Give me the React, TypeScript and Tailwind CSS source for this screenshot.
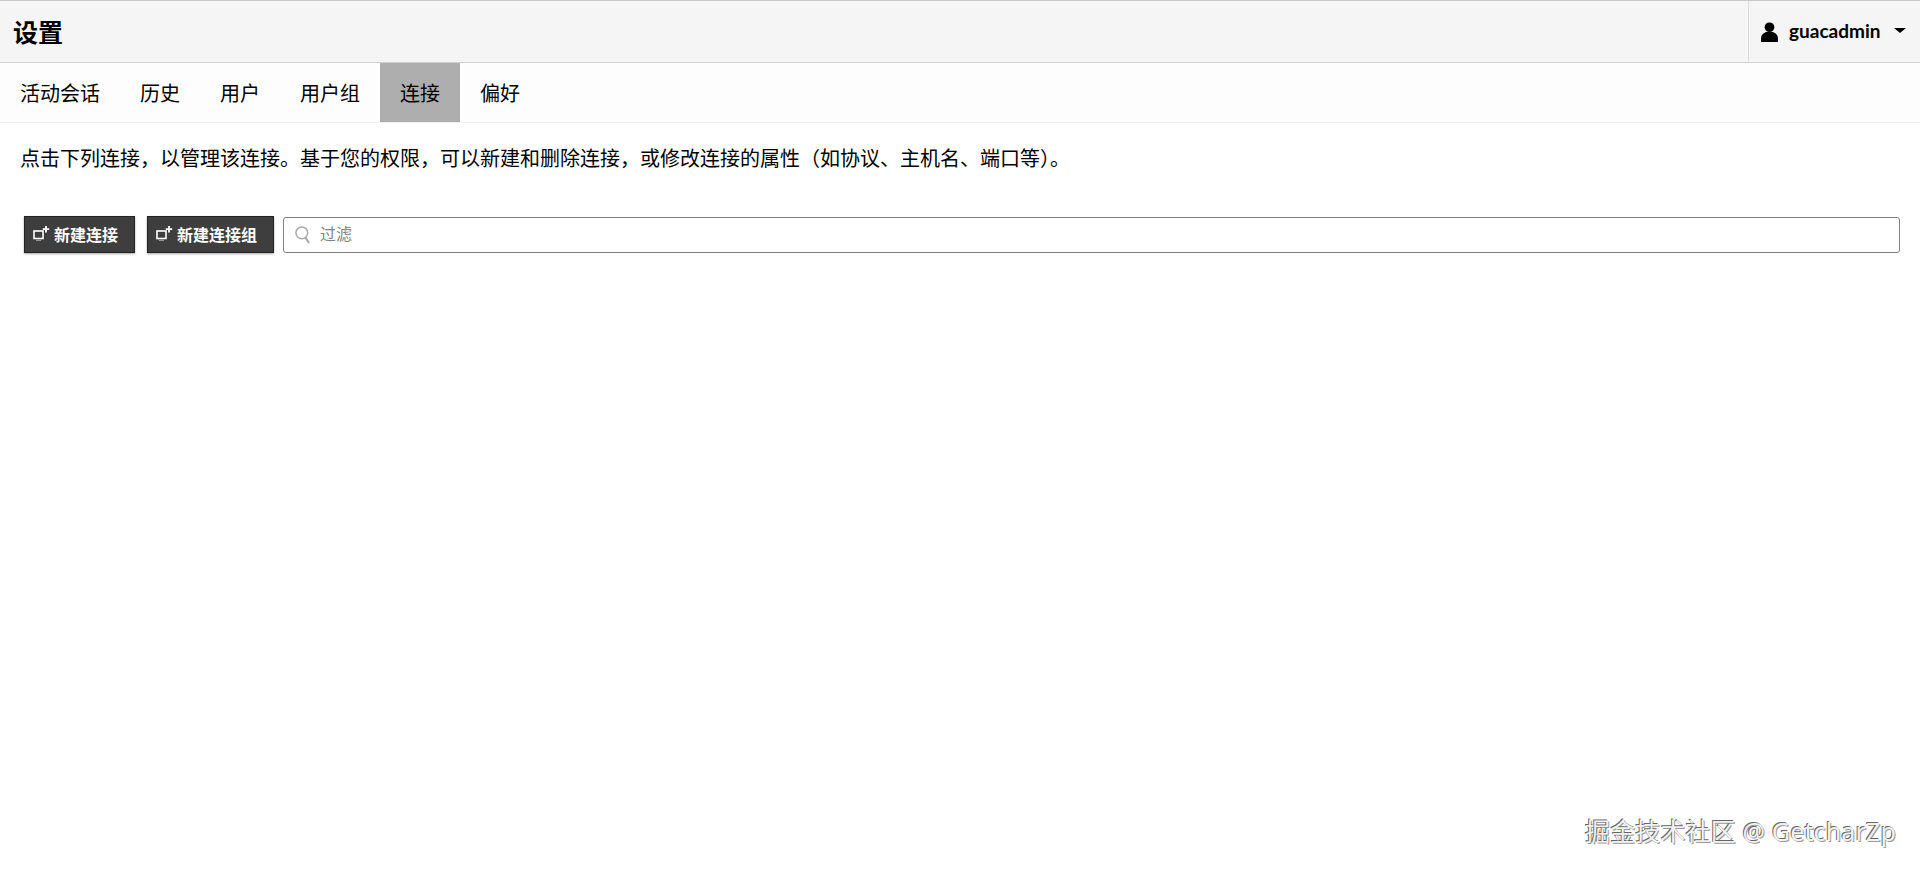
import React from 'react';

const FONT = "font-['Lato','Noto_Sans_CJK_SC','Noto_Sans',sans-serif]";

const tabs = ['活动会话', '历史', '用户', '用户组', '连接', '偏好'];

const AddIcon = () => (
  <svg width="17" height="16" viewBox="0 0 17 16" className="shrink-0 -translate-y-[2px]">
    <rect x="1" y="6" width="9" height="7.500" fill="none" stroke="#fff" strokeWidth="1.600" />
    <path d="M3 15.300h5" stroke="#aaa" strokeWidth="1" />
    <path d="M13 1v6.500M9.800 4.200h6.400" stroke="#fff" strokeWidth="1.800" />
  </svg>
);

const UserIcon = () => (
  <svg width="17" height="20" viewBox="0 0 16 19">
    <circle cx="8" cy="5" r="4.6" fill="#000" />
    <path d="M0 19v-3.5C0 12 3 10 5 9.500h6c2 .5 5 2.500 5 6V19z" fill="#000" />
  </svg>
);

const SearchIcon = () => (
  <svg width="16" height="18" viewBox="0 0 16 18" fill="none" stroke="#aaa">
    <circle cx="6.800" cy="6.800" r="5.900" strokeWidth="1.500" />
    <path d="M10.500 11.500l3.500 5.500" strokeWidth="2.200" />
  </svg>
);

const ActionButton = ({ label }: { label: string }) => (
  <button className="flex h-[37px] items-center border border-[#222] bg-[#3e3e3e] pl-[8px] pr-[16px] text-[16px] font-bold text-white shadow-[0_1px_2px_rgba(0,0,0,0.35)]">
    <AddIcon />
    <span className="ml-[4px]">{label}</span>
  </button>
);

export default function App() {
  return (
    <div className={`${FONT} relative min-h-[870px] bg-white text-black`}>
      <header className="flex h-[63px] items-stretch border-y border-t-[#c8c8c8] border-b-[#d0d0d0] bg-[#f5f5f5] shadow-[0_1px_2px_rgba(0,0,0,0.08)]">
        <h1 className="flex-1 translate-y-[1px] self-center pl-[13px] text-[25px] leading-none font-bold">设置</h1>
        <div className="flex w-[172px] items-center border-l border-[#dcdcdc] pl-[12px]">
          <UserIcon />
          <span className="ml-[11px] text-[19px] font-bold">guacadmin</span>
          <span className="ml-[14px] h-0 w-0 -translate-y-[1px] border-x-[6px] border-t-[5px] border-x-transparent border-t-black" />
        </div>
      </header>

      <nav className="flex h-[60px] border-b border-[#f0f0f0] bg-[#fdfdfd]">
        {tabs.map((tab) => (
          <a
            key={tab}
            className={`flex items-center px-[20px] text-[20px] ${tab === '连接' ? 'bg-[#aeaeae]' : ''}`}
          >
            {tab}
          </a>
        ))}
      </nav>

      <p className="mt-[21px] pl-[20px] text-[20px] leading-[28px]">
        点击下列连接，以管理该连接。基于您的权限，可以新建和删除连接，或修改连接的属性（如协议、主机名、端口等）。
      </p>

      <div className="mt-[44px] flex items-center pl-[24px] pr-[20px]">
        <ActionButton label="新建连接" />
        <div className="w-[12px]" />
        <ActionButton label="新建连接组" />
        <div className="ml-[9px] flex h-[36px] flex-1 items-center rounded-[3px] border border-[#808080] pl-[11px]">
          <SearchIcon />
          <span className="ml-[9px] -translate-y-[1px] text-[16px] text-[#858585]">过滤</span>
        </div>
      </div>

      <div className="absolute right-[24px] bottom-[26px] font-['Noto_Sans','Noto_Sans_CJK_SC',sans-serif] text-[25px] leading-none tracking-[0.15px] text-[#f2f2f2] [text-shadow:-1px_-1px_0_#666,1px_1px_0_#999]">
        掘金技术社区 @ GetcharZp
      </div>
    </div>
  );
}
